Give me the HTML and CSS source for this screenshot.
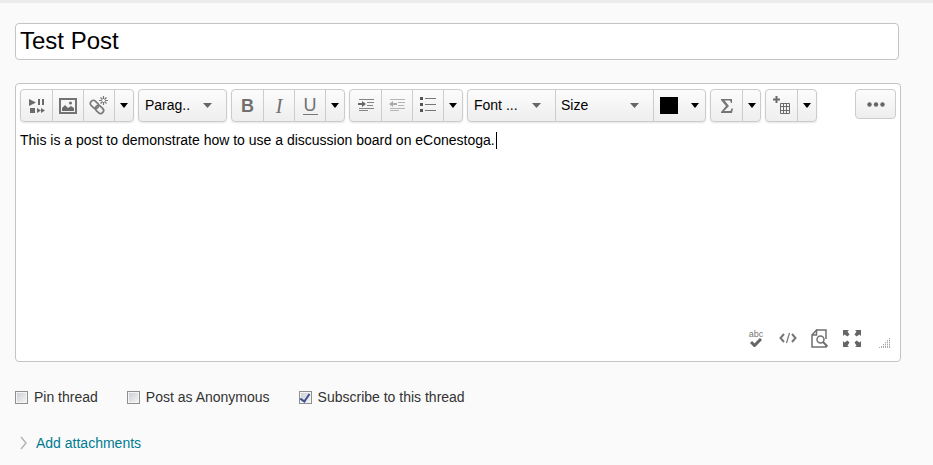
FILE: index.html
```html
<!DOCTYPE html>
<html lang="en">
<head>
<meta charset="utf-8">
<title>New thread</title>
<link rel="stylesheet" href="styles.css">
</head>
<body>
<form class="page">
  <input class="subject" type="text" value="Test Post" aria-label="Subject">

  <section class="editor">
    <div class="toolbar">
      <div class="group">
        <button type="button" class="tool" aria-label="Insert media"><svg width="18" height="18" viewBox="0 0 18 18" fill="#6b6b6b"><path d="M1 2l7 3.500-7 3.500zM10 2h2v6h-2zM14 2h2v6h-2zM2 11h5v5H2zM9 11l4 2.500V11l4 2.500-4 2.500v-2.500L9 16z"/></svg></button>
        <button type="button" class="tool" aria-label="Insert image"><svg width="18" height="16" viewBox="0 0 18 16"><path d="M1 1h16v14H1z" fill="none" stroke="#737373" stroke-width="2"/><path d="M3 13v-3l3-3 3 3 3-2 3 2v3z" fill="#6b6b6b"/><circle cx="11.500" cy="5" r="1.500" fill="#6b6b6b"/></svg></button>
        <button type="button" class="tool" aria-label="Insert link"><svg width="20" height="20" viewBox="0 0 20 20" fill="none" stroke="#777"><rect x="1" y="5.500" width="9" height="6" rx="3" transform="rotate(45 5.500 8.500)" stroke-width="1.600"/><rect x="6" y="10.500" width="9" height="6" rx="3" transform="rotate(45 10.500 13.500)" stroke-width="1.600"/><path d="M14.500 0v3M14.500 6v3M10 4.500h3M16 4.500h3M11.500 1.500l2 2M17.500 1.500l-2 2M11.500 7.500l2-2M17.500 7.500l-2-2" stroke-width="1.200"/></svg></button>
        <button type="button" class="tool drop wide" aria-label="More insert options"><svg width="8" height="5" viewBox="0 0 8 5"><path d="M0 0h8L4 5z"/></svg></button>
      </div>
      <div class="group">
        <div class="pick pick-format"><select aria-label="Format"><option>Parag..</option></select><svg width="9" height="5" viewBox="0 0 9 5"><path d="M0 0h9L4.500 5z"/></svg></div>
      </div>
      <div class="group">
        <button type="button" class="tool glyph bold" aria-label="Bold">B</button>
        <button type="button" class="tool glyph italic" aria-label="Italic">I</button>
        <button type="button" class="tool glyph underline" aria-label="Underline"><span>U</span></button>
        <button type="button" class="tool drop wide" aria-label="More text styles"><svg width="8" height="5" viewBox="0 0 8 5"><path d="M0 0h8L4 5z"/></svg></button>
      </div>
      <div class="group">
        <button type="button" class="tool list" aria-label="Increase indent"><svg width="16" height="12" viewBox="0 0 16 12"><path d="M1 .5h15M9 3.500h7M9 6.500h6M1 9.500h15M1 11.500h9" stroke="#858585"/><path d="M0 4h4V2l4 3-4 3V6H0z" fill="#666"/></svg></button>
        <button type="button" class="tool list" aria-label="Decrease indent"><svg width="16" height="12" viewBox="0 0 16 12"><path d="M1 .5h15M9 3.500h7M9 6.500h6M1 9.500h15M1 11.500h9" stroke="#b5b5b5"/><path d="M8 4H4V2L0 5l4 3V6h4z" fill="#aaa"/></svg></button>
        <button type="button" class="tool list" aria-label="Bulleted list"><svg width="16" height="15" viewBox="0 0 16 15"><path d="M0 0h3v3H0zM0 6h3v3H0zM0 12h3v3H0z" fill="#555"/><path d="M5 1.500h11M5 7.500h11M5 13.500h11" stroke="#777"/></svg></button>
        <button type="button" class="tool drop wide" aria-label="More list options"><svg width="8" height="5" viewBox="0 0 8 5"><path d="M0 0h8L4 5z"/></svg></button>
      </div>
      <div class="group">
        <div class="pick pick-font"><select aria-label="Font family"><option>Font ...</option></select><svg width="9" height="5" viewBox="0 0 9 5"><path d="M0 0h9L4.500 5z"/></svg></div>
        <div class="pick pick-size"><select aria-label="Font size"><option>Size</option></select><svg width="9" height="5" viewBox="0 0 9 5"><path d="M0 0h9L4.500 5z"/></svg></div>
        <button type="button" class="tool color" aria-label="Text color"><span class="swatch"></span><svg width="8" height="5" viewBox="0 0 8 5"><path d="M0 0h8L4 5z"/></svg></button>
      </div>
      <div class="group">
        <button type="button" class="tool" aria-label="Insert equation"><svg width="12" height="14" viewBox="0 0 12 14"><path d="M0 0h11v4h-1L9 1.500H3.500L8 7l-5 5h6.500l1-2.500H12L11 14H0v-1l5-6-5-6z" fill="#757575"/></svg></button>
        <button type="button" class="tool drop" aria-label="More equation options"><svg width="8" height="5" viewBox="0 0 8 5"><path d="M0 0h8L4 5z"/></svg></button>
      </div>
      <div class="group">
        <button type="button" class="tool list" aria-label="Insert table"><svg width="18" height="18" viewBox="0 0 18 18" fill="none"><path d="M0 3.500h7M3.500 0v7" stroke="#6b6b6b" stroke-width="2"/><path d="M7.500 7.500h9v10h-9zM10.500 7v11M13.500 7v11M7 10.500h10M7 14.500h10" stroke="#6b6b6b"/></svg></button>
        <button type="button" class="tool drop wide" aria-label="More table options"><svg width="8" height="5" viewBox="0 0 8 5"><path d="M0 0h8L4 5z"/></svg></button>
      </div>
      <button type="button" class="more" aria-label="Show all components"><svg width="18" height="5" viewBox="0 0 18 5" fill="#666"><circle cx="2.500" cy="2.500" r="2.200"/><circle cx="9" cy="2.500" r="2.200"/><circle cx="15.500" cy="2.500" r="2.200"/></svg></button>
    </div>

    <div class="content">
      <textarea class="message" aria-label="Message" spellcheck="false">This is a post to demonstrate how to use a discussion board on eConestoga.</textarea>
      <span class="caret"></span>
    </div>

    <div class="footer">
      <button type="button" class="spell" aria-label="Check spelling"><span>abc</span><svg width="12" height="9" viewBox="0 0 12 9"><path d="M1 4l3.500 3.500L11 1" fill="none" stroke="#666" stroke-width="3"/></svg></button>
      <button type="button" aria-label="HTML source"><svg width="18" height="12" viewBox="0 0 18 12" fill="none" stroke="#777"><path d="M5 2L1.500 6 5 10M13 2l3.500 4L13 10" stroke-width="2"/><path d="M10.500 1l-3 10" stroke-width="1.200"/></svg></button>
      <button type="button" aria-label="Preview"><svg width="18" height="19" viewBox="0 0 18 19" fill="none" stroke="#707070"><path d="M5.500 1H15v9M15 16v2H1V6h4.500V1L1 6" stroke-width="1.500"/><circle cx="9.500" cy="10.500" r="3.500" stroke-width="1.500"/><path d="M12 13l4.500 4.500" stroke-width="2"/></svg></button>
      <button type="button" aria-label="Full screen"><svg width="18" height="17" viewBox="0 0 18 17" fill="#666"><path d="M0 0h6L4.500 1.500l2 3-2 2-3-2L0 6zM18 0v6l-1.500-1.500-3 2-2-2 2-3L12 0zM0 17v-6l1.500 1.500 3-2 2 2-2 3L6 17zM18 17h-6l1.500-1.500-2-3 2-2 3 2L18 11z"/></svg></button>
      <svg class="grip" width="11" height="10" viewBox="0 0 11 10"><path d="M.5 9v1M2.500 8v2M4.500 6v4M6.500 4v6M8.500 2v8M10.500 0v10" stroke="#aaa"/><path d="M0 7.500h11M0 5.500h11M0 3.500h11M0 1.500h11" stroke="#fff" stroke-width=".6"/></svg>
    </div>
  </section>

  <div class="options">
    <label><input type="checkbox">Pin thread</label>
    <label><input type="checkbox">Post as Anonymous</label>
    <label><input type="checkbox" checked>Subscribe to this thread</label>
  </div>

  <a class="attach" href="#"><svg width="7" height="14" viewBox="0 0 7 14"><path d="M1 1l5 6-5 6" fill="none" stroke="#b5b5b5" stroke-width="1.500"/></svg>Add attachments</a>
</form>
</body>
</html>
```
FILE: styles.css
```css
* {
  box-sizing: border-box;
}

body {
  margin: 0;
  border-top: 3px solid #ebebeb;
  background: #fafafa;
  color: #333;
  font: 14px/18px "Liberation Sans", Arial, sans-serif;
}

button,
input,
select,
textarea {
  margin: 0;
  font: inherit;
}

svg {
  display: block;
  flex: none;
}

.page {
  padding: 20px 32px 0 15px;
}

.subject {
  display: block;
  width: calc(100% - 2px);
  height: 37px;
  padding: 0 4px 2px;
  border: 1px solid #c4c4c4;
  border-radius: 4px;
  background: #fff;
  color: #000;
  font-size: 24px;
}

.editor {
  margin-top: 23px;
  border: 1px solid #c4c4c4;
  border-radius: 4px;
  background: #fff;
}

.toolbar {
  display: flex;
  align-items: flex-start;
  gap: 4px;
  padding: 5px 4px 0;
}

.group {
  display: flex;
  height: 33px;
  border: 1px solid #ccc;
  border-radius: 4px;
  background: linear-gradient(#fcfcfc, #eee);
  box-shadow: 0 1px 2px #e4e4e4;
}

.tool {
  display: flex;
  align-items: center;
  justify-content: center;
  width: 31px;
  padding: 0;
  border: 0;
  background: none;
}

.group > * + * {
  border-left: 1px solid #ccc;
}

.drop {
  width: 18px;
  padding-bottom: 1px;
}

.wide {
  width: 19px;
}

.glyph {
  color: #707070;
  font-size: 18px;
}

.bold {
  font-weight: bold;
}

.italic {
  font-family: "Liberation Serif", serif;
  font-size: 20px;
  font-style: italic;
}

.underline span {
  padding: 0 1px;
  border-bottom: 1px solid #777;
  line-height: 17px;
}

.list {
  padding-bottom: 2px;
}

.pick {
  position: relative;
}

.pick select {
  width: 100%;
  height: 100%;
  padding: 0 30px 2px 6px;
  border: 0;
  background: none;
  color: #000;
  appearance: none;
}

.pick svg {
  position: absolute;
  top: 13px;
  right: 14px;
  fill: #666;
  pointer-events: none;
}

.pick-format,
.pick-font {
  width: 87px;
}

.pick-size {
  width: 98px;
}

.pick-size select {
  padding-left: 5px;
}

.color {
  gap: 13px;
  width: 52px;
}

.swatch {
  width: 18px;
  height: 17px;
  background: #000;
}

.more {
  display: flex;
  align-items: center;
  justify-content: center;
  width: 41px;
  height: 30px;
  margin-left: auto;
  padding: 0;
  border: 1px solid #ccc;
  border-radius: 4px;
  background: linear-gradient(#fcfcfc, #eee);
}

.content {
  position: relative;
}

.message {
  display: block;
  width: 100%;
  height: 206px;
  padding: 9px 4px;
  border: 0;
  outline: 0;
  background: none;
  color: #000;
  resize: none;
}

.caret {
  position: absolute;
  top: 10px;
  left: 480px;
  width: 1px;
  height: 17px;
  background: #000;
}

.footer {
  display: flex;
  align-items: center;
  justify-content: flex-end;
  gap: 14px;
  height: 20px;
  margin-bottom: 13px;
  padding-right: 10px;
}

.footer button {
  display: flex;
  flex-direction: column;
  align-items: center;
  justify-content: center;
  width: 18px;
  padding: 0;
  border: 0;
  background: none;
}

.spell span {
  color: #777;
  font-size: 9px;
  line-height: 8px;
}

.grip {
  align-self: flex-end;
  margin-left: 4px;
}

.options {
  display: flex;
  gap: 29px;
  margin-top: 26px;
}

.options label {
  display: flex;
  align-items: center;
  gap: 6px;
}

.options input {
  display: grid;
  place-items: center;
  width: 13px;
  height: 13px;
  border: 1px solid #8e8f8f;
  background: linear-gradient(135deg, #c8ccd2, #f6f6f6);
  box-shadow: inset 0 0 0 1px #f4f4f4;
  appearance: none;
}

.options input:checked::after {
  width: 4px;
  height: 8px;
  border: solid #3c4f91;
  border-width: 0 2px 2px 0;
  content: "";
  transform: rotate(35deg);
}

.attach {
  display: inline-flex;
  align-items: center;
  gap: 9px;
  margin-top: 28px;
  padding-left: 5px;
  color: #007a91;
  text-decoration: none;
}
```
